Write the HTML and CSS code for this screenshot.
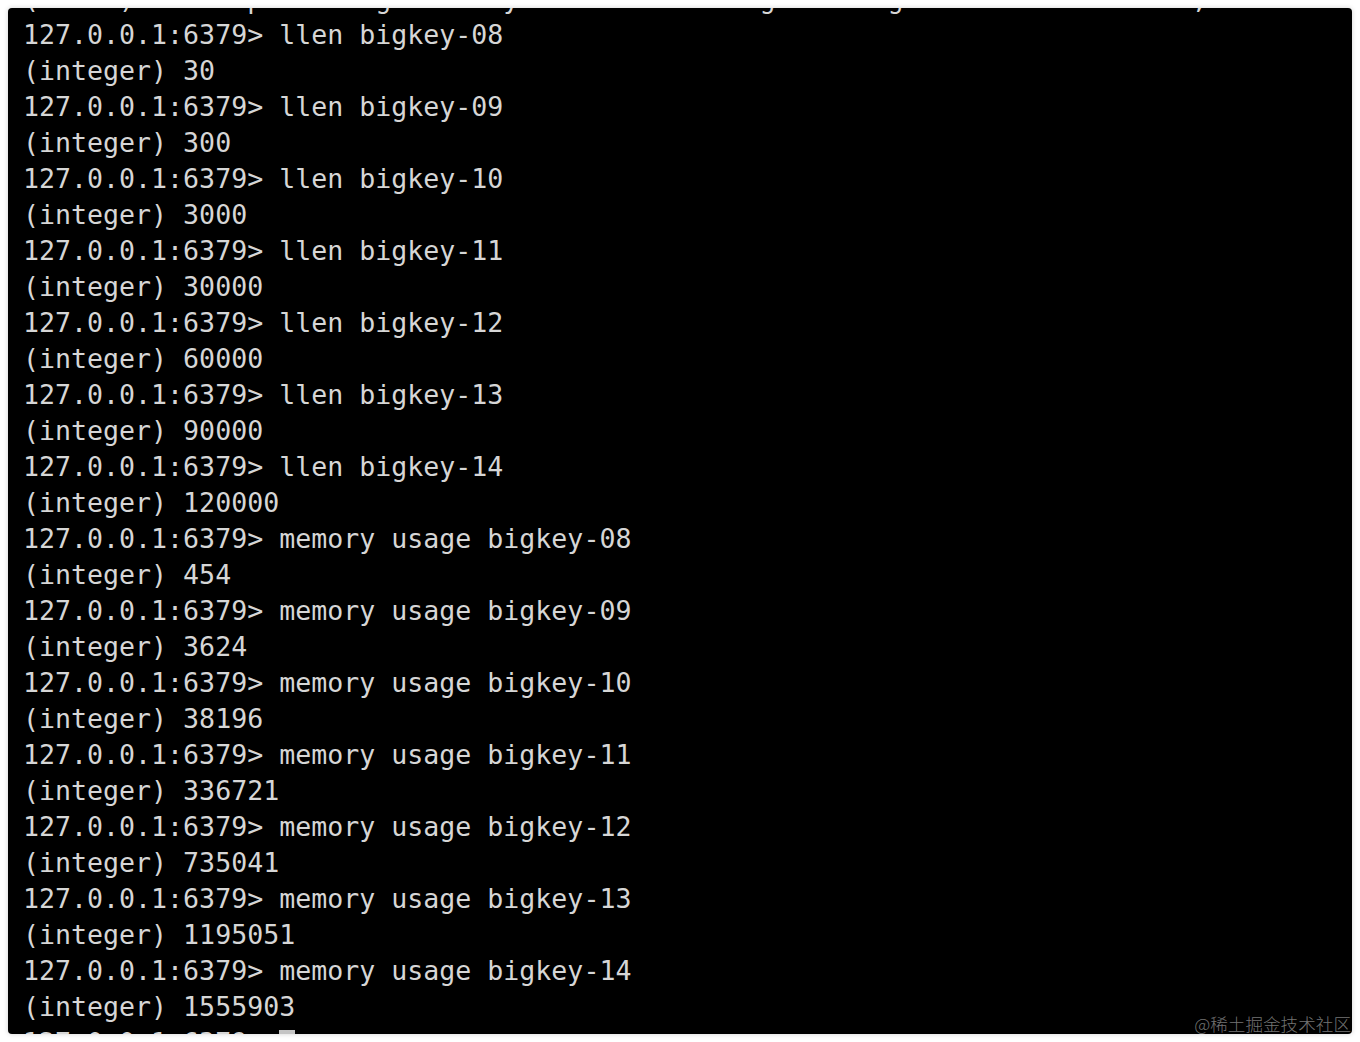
FILE: index.html
```html
<!DOCTYPE html>
<html lang="zh">
<head>
<meta charset="utf-8">
<title>redis-cli</title>
<link rel="stylesheet" href="styles.css">
</head>
<body>
<div class="term">
<pre class="out">(error) ERR nop       g       y               g       g        .         ,
127.0.0.1:6379&gt; llen bigkey-08
(integer) 30
127.0.0.1:6379&gt; llen bigkey-09
(integer) 300
127.0.0.1:6379&gt; llen bigkey-10
(integer) 3000
127.0.0.1:6379&gt; llen bigkey-11
(integer) 30000
127.0.0.1:6379&gt; llen bigkey-12
(integer) 60000
127.0.0.1:6379&gt; llen bigkey-13
(integer) 90000
127.0.0.1:6379&gt; llen bigkey-14
(integer) 120000
127.0.0.1:6379&gt; memory usage bigkey-08
(integer) 454
127.0.0.1:6379&gt; memory usage bigkey-09
(integer) 3624
127.0.0.1:6379&gt; memory usage bigkey-10
(integer) 38196
127.0.0.1:6379&gt; memory usage bigkey-11
(integer) 336721
127.0.0.1:6379&gt; memory usage bigkey-12
(integer) 735041
127.0.0.1:6379&gt; memory usage bigkey-13
(integer) 1195051
127.0.0.1:6379&gt; memory usage bigkey-14
(integer) 1555903
127.0.0.1:6379&gt; <span class="cursor"> </span></pre>
</div>
<div class="mark">@稀土掘金技术社区</div>
</body>
</html>
```
FILE: styles.css
```css
html, body {
  margin: 0;
  padding: 0;
  background: #ffffff;
}
body {
  width: 1360px;
  height: 1042px;
  position: relative;
  overflow: hidden;
}
.term {
  margin: 8px;
  width: 1344px;
  height: 1026px;
  background: #000000;
  border-radius: 4px;
  box-shadow: 0 0 5px rgba(0, 0, 0, 0.18);
  overflow: hidden;
}
.out {
  margin: -27px 0 0 0;
  padding: 0 0 0 15px;
  font-family: "DejaVu Sans Mono", "Liberation Mono", monospace;
  font-size: 26.6px;
  line-height: 36px;
  color: #d6d6d6;
  white-space: pre;
}
.cursor {
  display: inline-block;
  width: 16px;
  height: 30px;
  background: #c4c4c4;
  vertical-align: top;
  margin-top: 5px;
}
.mark {
  position: absolute;
  right: 9px;
  bottom: 8px;
  font-family: "Noto Sans CJK SC", "Noto Sans", sans-serif;
  font-size: 17.6px;
  line-height: 20px;
  color: rgba(255, 255, 255, 0.45);
  font-weight: 300;
}
```
